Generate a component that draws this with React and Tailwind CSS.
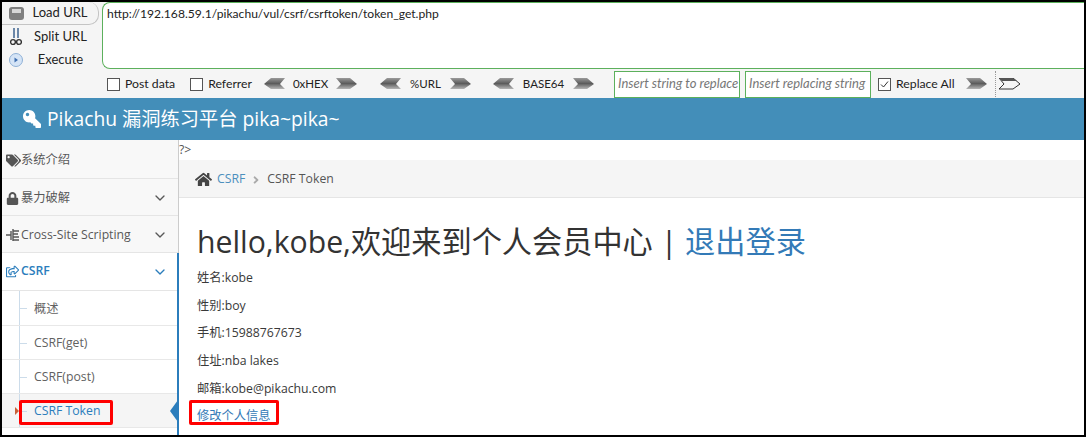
import React from 'react'
import { FaHome, FaKey, FaLock, FaTags, FaRegShareSquare, FaAngleRight } from 'react-icons/fa'
import { LuChevronDown } from 'react-icons/lu'

const cjk = '"Open Sans","Noto Sans CJK SC",sans-serif'
const toolbarFont = 'font-["Lato","Noto_Sans_CJK_SC",sans-serif]'

function Arrow({ dir = 'right', hollow = false }) {
    const points = dir === 'right' ? '0,0 14,0 21,6 14,11 0,11 5,6' : '21,0 7,0 0,6 7,11 21,11 16,6'
    const id = `grad-${dir}-${hollow ? 'h' : 's'}`
    return (
        <svg width="21" height="12" viewBox="0 0 21 12" className="shrink-0">
            <defs>
                <linearGradient id={id} x1="0" y1="0" x2="0" y2="1">
                    <stop offset="0" stopColor="#9a9a9a" />
                    <stop offset="0.5" stopColor="#5c5c5c" />
                    <stop offset="1" stopColor="#b5b5b5" />
                </linearGradient>
            </defs>
            <polygon
                points={points}
                fill={hollow ? '#f5f5f5' : `url(#${id})`}
                stroke={hollow ? '#333' : 'none'}
                strokeWidth="1"
            />
            {hollow && <polygon points="0,0 14,0 18,3 3,3" fill="#555" />}
        </svg>
    )
}

function Check({ label, checked }) {
    return (
        <label className="flex items-center gap-[5px] text-[12.25px] text-[#222]">
            <span className="flex h-[13px] w-[13px] items-center justify-center border border-[#555] bg-white">
                {checked && (
                    <svg width="9" height="9" viewBox="0 0 9 9">
                        <path d="M1 4.5 L3.5 7 L8 1.5" fill="none" stroke="#333" strokeWidth="1" />
                    </svg>
                )}
            </span>
            {label}
        </label>
    )
}

function Encoder({ label, className }) {
    return (
        <div className={`flex items-center justify-between ${className}`}>
            <Arrow dir="left" />
            <span className="text-[11.5px] text-[#222]">{label}</span>
            <Arrow />
        </div>
    )
}

function SideButton({ label, icon, raised }) {
    return (
        <div
            className={`flex h-[23px] items-center text-[13px] text-[#222] ${
                raised ? 'rounded-r-[10px] border-r border-b border-[#c4c4c4] bg-[#f4f4f4]' : ''
            }`}
        >
            <span className="flex w-[28px] justify-center">{icon}</span>
            <span className="flex-1 pr-[8px] text-center">{label}</span>
        </div>
    )
}

function CrossIcon() {
    return (
        <svg width="14" height="14" viewBox="0 0 14 14" className="shrink-0">
            <path d="M0 7h5M5 3v9M7 1v12M7 3h6M7 6h5M7 9h6M7 12h6" stroke="#555" strokeWidth="1.4" fill="none" />
        </svg>
    )
}

function MenuItem({ icon, label, arrow, active, h }) {
    return (
        <div
            className={`flex items-center border-b border-[#e5e5e5] pl-[4px] pr-[10px] text-[12.25px] ${h} ${
                active ? 'bg-white font-semibold text-[#2b7dbc]' : 'bg-[#f8f8f8] pt-[2px] text-[#585858]'
            }`}
        >
            <span className="flex w-[15px] shrink-0 items-center">{icon}</span>
            <span className="flex-1 whitespace-nowrap">{label}</span>
            {arrow && <LuChevronDown className="text-[16px]" />}
        </div>
    )
}

function SubItem({ label, active, h }) {
    return (
        <div
            className={`relative flex items-center border-b border-[#e8e8e8] pl-[32px] pt-[2px] text-[12.25px] ${h} ${
                active ? 'bg-[#f5f5f5] text-[#2b7dbc]' : 'bg-white text-[#616161]'
            }`}
        >
            <span className="absolute left-[17px] top-0 h-full w-px bg-[#ccdcea]" />
            <span className="absolute left-[18px] top-1/2 h-px w-[7px] bg-[#ccdcea]" />
            {label}
            {active && (
                <>
                    <span className="absolute left-[13px] top-[13px] h-0 w-0 border-y-[4px] border-l-[4px] border-y-transparent border-l-[#c86139]" />
                    <span className="absolute right-0 top-[6px] h-0 w-0 border-y-[11px] border-r-[8px] border-y-transparent border-r-[#2b7dbc]" />
                    <span className="absolute left-[17px] top-[6px] h-[25px] w-[94px] rounded-[2px] border-[3px] border-[#f00]" />
                </>
            )}
        </div>
    )
}

export default function App() {
    return (
        <div
            className="h-[437px] w-[1086px] overflow-hidden border-t-2 border-r-2 border-b-2 border-l-2 border-black bg-white"
            style={{ fontFamily: cjk }}
        >
            {/* hackbar */}
            <div className={`h-[96px] bg-[#f5f5f5] ${toolbarFont}`}>
                <div className="flex h-[67px]">
                    <div className="w-[97px] shrink-0">
                        <SideButton
                            raised
                            label="Load URL"
                            icon={
                                <span className="flex h-[13px] w-[15px] items-start justify-center rounded-[3px] bg-[#808080] pt-[2px]">
                                    <span className="h-[4px] w-[9px] bg-[#d8d8d8]" />
                                </span>
                            }
                        />
                        <SideButton
                            label="Split URL"
                            icon={
                                <svg width="12" height="20" viewBox="0 0 12 20">
                                    <path d="M4 1v10M8 1v10" stroke="#6b87a8" strokeWidth="2" />
                                    <circle cx="3" cy="15" r="2.4" fill="none" stroke="#333" strokeWidth="1.4" />
                                    <circle cx="9" cy="15" r="2.4" fill="none" stroke="#333" strokeWidth="1.4" />
                                </svg>
                            }
                        />
                        <SideButton
                            label="Execute"
                            icon={
                                <svg width="14" height="14" viewBox="0 0 14 14">
                                    <circle cx="7" cy="7" r="6.5" fill="#d5e4f6" stroke="#8fb0d6" />
                                    <path d="M5.5 4.5 L9 7 L5.5 9.5Z" fill="#3f6fb0" />
                                </svg>
                            }
                        />
                    </div>
                    <div className="ml-[3px] flex-1 rounded-l-[8px] border border-r-0 border-[#5cb05c] bg-white pl-[4px] pt-[2px] text-[12.1px] leading-[18px] text-[#222]">
                        http://192.168.59.1/pikachu/vul/csrf/csrftoken/token_get.php
                    </div>
                </div>
                <div className="flex h-[29px] items-center pl-[105px] pt-[1px]">
                    <Check label="Post data" />
                    <div className="ml-[15px]">
                        <Check label="Referrer" />
                    </div>
                    <Encoder label="0xHEX" className="ml-[12px] w-[93px]" />
                    <Encoder label="%URL" className="ml-[23px] w-[91px]" />
                    <Encoder label="BASE64" className="ml-[22px] w-[101px]" />
                    <div className="ml-[20px] flex h-[27px] w-[126px] items-center overflow-hidden whitespace-nowrap border border-[#5cb05c] bg-white pl-[3px] text-[13px] italic text-[#777]">
                        Insert string to replace
                    </div>
                    <div className="ml-[5px] flex h-[27px] w-[126px] items-center overflow-hidden whitespace-nowrap border border-[#5cb05c] bg-white pl-[3px] text-[13px] italic text-[#777]">
                        Insert replacing string
                    </div>
                    <div className="ml-[7px]">
                        <Check checked label="Replace All" />
                    </div>
                    <div className="ml-[11px]">
                        <Arrow />
                    </div>
                    <div className="ml-[8px] h-[26px] border-l border-dotted border-[#999]" />
                    <div className="ml-[3px]">
                        <Arrow hollow />
                    </div>
                </div>
            </div>

            {/* header */}
            <div className="flex h-[42px] items-center bg-[#438eb9] pl-[21px] text-[19.25px] text-white">
                <FaKey className="mr-[6px] -scale-x-100 text-[18px]" />
                Pikachu 漏洞练习平台 pika~pika~
            </div>

            <div className="flex h-[295px]">
                {/* sidebar */}
                <div className="relative w-[177px] shrink-0 border-r border-[#cccccc] bg-white">
                    <MenuItem h="h-[39px]" icon={<FaTags className="text-[#555] text-[15px]" />} label="系统介绍" />
                    <MenuItem h="h-[37px]" arrow icon={<FaLock className="text-[#555] text-[13px]" />} label="暴力破解" />
                    <MenuItem h="h-[37px]" arrow icon={<CrossIcon />} label="Cross-Site Scripting" />
                    <MenuItem h="h-[38px]" arrow active icon={<FaRegShareSquare className="text-[#2b7dbc] text-[13px]" />} label="CSRF" />
                    <SubItem h="h-[35px]" label="概述" />
                    <SubItem h="h-[34px]" label="CSRF(get)" />
                    <SubItem h="h-[34px]" label="CSRF(post)" />
                    <SubItem h="h-[34px]" active label="CSRF Token" />
                    <span className="absolute right-[-1px] top-[113px] h-[182px] w-[2px] bg-[#2b7dbc]" />
                </div>

                {/* content */}
                <div className="min-w-0 flex-1">
                    <div className="h-[20px] text-[12.25px] leading-[20px] text-[#555]">?&gt;</div>
                    <div className="flex h-[38px] items-center border-b border-[#e5e5e5] bg-[#f5f5f5] pl-[16px] pt-[2px] text-[12.25px] text-[#555]">
                        <FaHome className="mr-[5px] text-[17px] text-[#444]" />
                        <span className="text-[#4c8fbd]">CSRF</span>
                        <FaAngleRight className="mx-[5px] text-[12px] text-[#aaa]" />
                        CSRF Token
                    </div>
                    <div className="relative pl-[18px] text-[12.25px] text-[#393939]">
                        <h1 className="pt-[22px] text-[30.2px] font-normal leading-[44px] text-[#333]">
                            hello,kobe,欢迎来到个人会员中心 | <span className="text-[#337ab7]">退出登录</span>
                        </h1>
                        <div className="flex flex-col">
                            <p className="h-[27.7px] leading-[27.7px]">姓名:kobe</p>
                            <p className="h-[27.7px] leading-[27.7px]">性别:boy</p>
                            <p className="h-[27.7px] leading-[27.7px]">手机:15988767673</p>
                            <p className="h-[27.7px] leading-[27.7px]">住址:nba lakes</p>
                            <p className="h-[27.7px] leading-[27.7px]">邮箱:kobe@pikachu.com</p>
                            <p className="h-[27.7px] leading-[27.7px] text-[#337ab7]">修改个人信息</p>
                        </div>
                        <span className="absolute left-[10px] top-[202px] h-[25px] w-[90px] rounded-[2px] border-[3px] border-[#f00]" />
                    </div>
                </div>
            </div>
        </div>
    )
}
